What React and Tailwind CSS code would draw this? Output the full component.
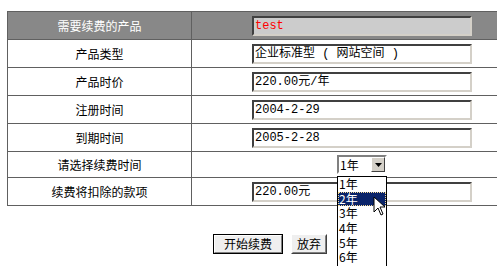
import React from 'react';

const cjk = { fontFamily: '"Noto Sans CJK SC", "Noto Sans", sans-serif' };
const mono = { fontFamily: '"Liberation Mono", "Noto Sans CJK SC", monospace' };

const rows = [
  { label: '产品类型', value: '企业标准型 ( 网站空间 )', h: 'h-[28px]' },
  { label: '产品时价', value: '220.00元/年', h: 'h-[28px]' },
  { label: '注册时间', value: '2004-2-29', h: 'h-[28px]' },
  { label: '到期时间', value: '2005-2-28', h: 'h-[28px]' },
  { label: '请选择续费时间', select: true, h: 'h-[26px]' },
  { label: '续费将扣除的款项', value: '220.00元', h: 'h-[28px]' },
];

function Field({ value, gray, red }) {
  return (
    <div
      className={`w-[220px] h-[20px] border-2 border-t-[#404040] border-l-[#404040] border-b-[#d4d0c8] border-r-[#d4d0c8] pl-px text-[12px] leading-[16px] whitespace-pre ${gray ? 'bg-[#cccccc]' : 'bg-white'} ${red ? 'text-[#ff0000]' : 'text-black'}`}
      style={mono}
    >
      {value}
    </div>
  );
}

function YearSelect() {
  const years = ['1年', '2年', '3年', '4年', '5年', '6年', '7年'];
  return (
    <div className="relative">
      <div className="flex w-[50px] h-[19px] border-2 border-t-[#808080] border-l-[#808080] border-b-white border-r-white bg-white">
        <div className="flex-1 pl-[1px] text-[12px] leading-[15px] text-black" style={cjk}>1年</div>
        <div className="w-[14px] h-[15px] bg-[#d4d0c8] border border-t-white border-l-white border-b-[#404040] border-r-[#404040] flex items-center justify-center">
          <svg width="7" height="4" viewBox="0 0 7 4"><path d="M0 0h7L3.5 4z" fill="#000" /></svg>
        </div>
      </div>
      <div className="absolute left-0 top-[21px] w-[50px] h-[120px] border border-black bg-white z-10 overflow-hidden">
        {years.map((y, i) => (
          <div
            key={y}
            className={`h-[14.7px] pl-[1px] text-[12px] leading-[14px] overflow-hidden ${i === 1 ? 'bg-[#0a246a] text-white outline-1 outline-dotted outline-[#f5db95] -outline-offset-1' : 'text-black'}`}
            style={cjk}
          >
            {y}
          </div>
        ))}
      </div>
      <svg className="absolute left-[36px] top-[41px] z-20" width="13" height="21" viewBox="0 0 13 21">
        <path d="M1 1v15l4-4 3 7 2-1-3-7h5z" fill="#fff" stroke="#000" strokeWidth="1" strokeLinejoin="miter" />
      </svg>
    </div>
  );
}

export default function App() {
  return (
    <div className="w-[497px] h-[266px] overflow-hidden bg-white" style={cjk}>
      <div className="ml-[7px] pt-[11px] w-[526px]">
        <div className="border-t border-l border-r border-[#606060]">
          <div className="flex h-[28px] border-b border-[#606060] bg-[#888888]">
            <div className="w-[184px] border-r border-[#606060] flex items-center justify-center text-[12px] text-white">
              需要续费的产品
            </div>
            <div className="flex-1 flex items-center justify-center">
              <Field value="test" gray red />
            </div>
          </div>
          {rows.map((r) => (
            <div key={r.label} className={`flex ${r.h} border-b border-[#606060]`}>
              <div className="w-[184px] border-r border-[#606060] flex items-center justify-center text-[12px] text-black">
                {r.label}
              </div>
              <div className="flex-1 flex items-center justify-center">
                {r.select ? <YearSelect /> : <Field value={r.value} />}
              </div>
            </div>
          ))}
        </div>
        <div className="flex justify-center gap-[8px] mt-[28px]">
          <button className="w-[70px] h-[20px] border border-black bg-[#efefef] text-[12px] leading-none text-black p-0">
            <div className="h-full flex items-center justify-center border border-t-white border-l-white border-b-[#808080] border-r-[#808080]">开始续费</div>
          </button>
          <button className="w-[36px] h-[20px] border border-t-white border-l-white border-b-[#404040] border-r-[#404040] bg-[#efefef] text-[12px] leading-none text-black p-0">
            <div className="h-full flex items-center justify-center border border-transparent border-b-[#808080] border-r-[#808080]">放弃</div>
          </button>
        </div>
      </div>
    </div>
  );
}
